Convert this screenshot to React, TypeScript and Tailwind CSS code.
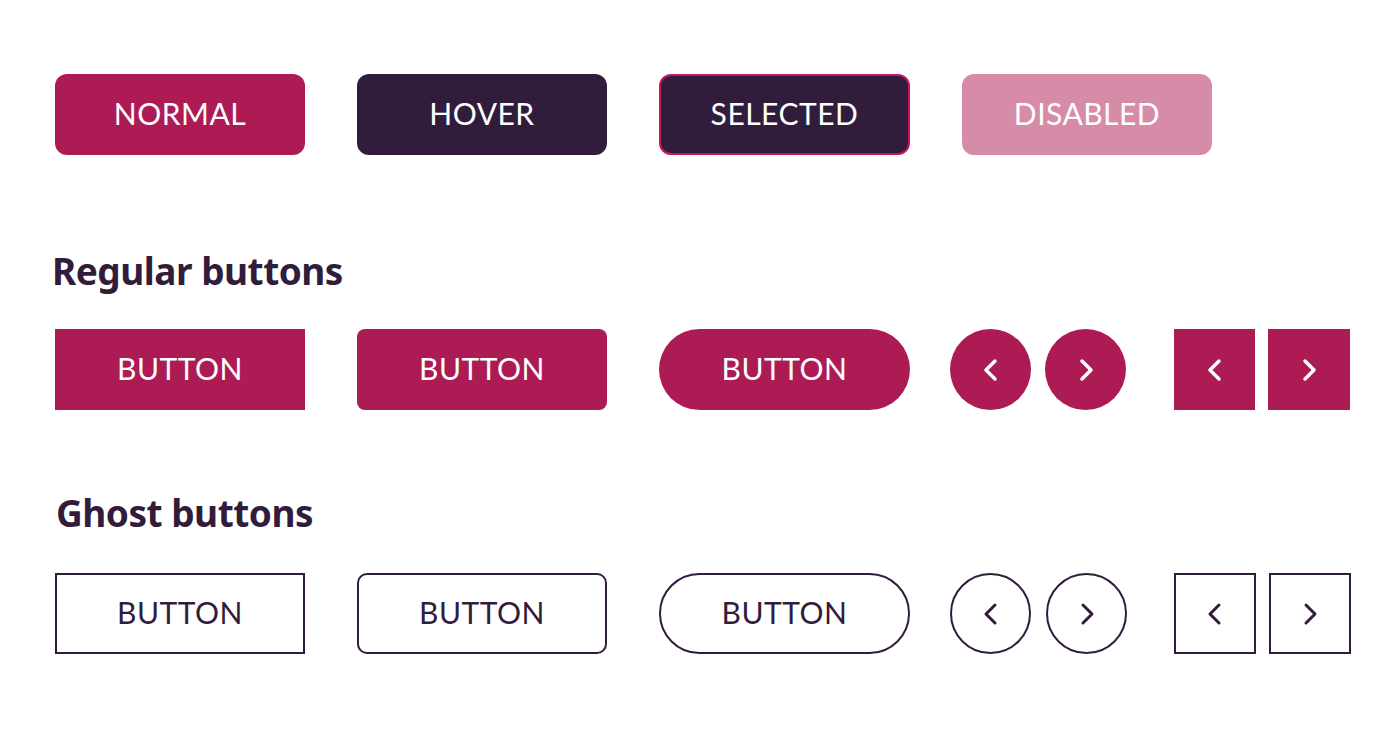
import React from "react";

const F = { fontFamily: "Lato, 'Noto Sans', sans-serif" };
const H = { fontFamily: "'Noto Sans', Lato, sans-serif" };

function Chevron({ dir, color, w = 3.5 }: { dir: "l" | "r"; color: string; w?: number }) {
  const d = dir === "l" ? "M16 3 L7 12 L16 21" : "M8 3 L17 12 L8 21";
  return (
    <svg width="24" height="24" viewBox="0 0 24 24" fill="none" className="shrink-0">
      <path d={d} stroke={color} strokeWidth={w} strokeLinecap="round" strokeLinejoin="round" />
    </svg>
  );
}

export default function App() {
  const label = "text-[30px] tracking-[0.5px] leading-none pb-[3px]";
  const head = "text-[37px] leading-[45px] font-bold text-[#321c3c] tracking-[-0.5px]";
  return (
    <div className="w-[1400px] h-[733px] bg-white overflow-hidden" style={F}>
      <div className="pl-[55px] pt-[74px] flex flex-col">
        {/* state row */}
        <div className="flex gap-[52px]">
          <div className={`w-[250px] h-[81px] rounded-[12px] bg-[#ad1b55] text-white flex items-center justify-center ${label}`}>NORMAL</div>
          <div className={`w-[250px] h-[81px] rounded-[12px] bg-[#321c3c] text-white flex items-center justify-center ${label}`}>HOVER</div>
          <div className={`w-[251px] h-[81px] rounded-[12px] bg-[#321c3c] border-2 border-[#c0185a] text-white flex items-center justify-center ${label}`}>SELECTED</div>
          <div className={`w-[250px] h-[81px] rounded-[12px] bg-[#d68ca9] text-white flex items-center justify-center ${label}`}>DISABLED</div>
        </div>

        <h2 className={`mt-[93px] ml-[-3px] ${head}`} style={H}>Regular buttons</h2>

        <div className="mt-[36px] flex items-center">
          <div className={`w-[250px] h-[81px] bg-[#ad1b55] text-white flex items-center justify-center ${label}`}>BUTTON</div>
          <div className={`ml-[52px] w-[250px] h-[81px] rounded-[8px] bg-[#ad1b55] text-white flex items-center justify-center ${label}`}>BUTTON</div>
          <div className={`ml-[52px] w-[251px] h-[81px] rounded-full bg-[#ad1b55] text-white flex items-center justify-center ${label}`}>BUTTON</div>
          <div className="ml-[40px] w-[81px] h-[81px] rounded-full bg-[#ad1b55] flex items-center justify-center"><Chevron dir="l" color="#fff" /></div>
          <div className="ml-[14px] w-[81px] h-[81px] rounded-full bg-[#ad1b55] flex items-center justify-center"><Chevron dir="r" color="#fff" /></div>
          <div className="ml-[48px] w-[81px] h-[81px] bg-[#ad1b55] flex items-center justify-center"><Chevron dir="l" color="#fff" /></div>
          <div className="ml-[13px] w-[82px] h-[81px] bg-[#ad1b55] flex items-center justify-center"><Chevron dir="r" color="#fff" /></div>
        </div>

        <h2 className={`mt-[80px] ml-[1px] ${head}`} style={H}>Ghost buttons</h2>

        <div className="mt-[38px] flex items-center">
          <div className={`w-[250px] h-[81px] border-2 border-[#321c3c] text-[#321c3c] flex items-center justify-center ${label}`}>BUTTON</div>
          <div className={`ml-[52px] w-[250px] h-[81px] rounded-[10px] border-2 border-[#321c3c] text-[#321c3c] flex items-center justify-center ${label}`}>BUTTON</div>
          <div className={`ml-[52px] w-[251px] h-[81px] rounded-full border-2 border-[#321c3c] text-[#321c3c] flex items-center justify-center ${label}`}>BUTTON</div>
          <div className="ml-[40px] w-[81px] h-[81px] rounded-full border-2 border-[#321c3c] flex items-center justify-center"><Chevron dir="l" color="#321c3c" w={3} /></div>
          <div className="ml-[15px] w-[81px] h-[81px] rounded-full border-2 border-[#321c3c] flex items-center justify-center"><Chevron dir="r" color="#321c3c" w={3} /></div>
          <div className="ml-[47px] w-[82px] h-[81px] border-2 border-[#321c3c] flex items-center justify-center"><Chevron dir="l" color="#321c3c" w={3} /></div>
          <div className="ml-[13px] w-[82px] h-[81px] border-2 border-[#321c3c] flex items-center justify-center"><Chevron dir="r" color="#321c3c" w={3} /></div>
        </div>
      </div>
    </div>
  );
}
